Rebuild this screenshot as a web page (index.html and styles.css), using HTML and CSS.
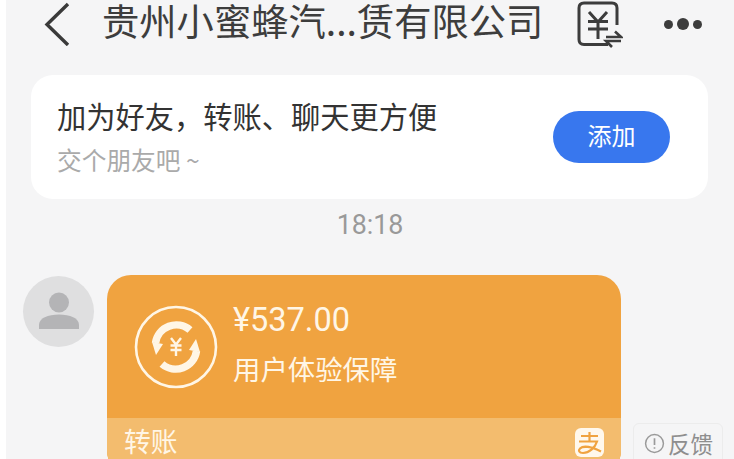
FILE: index.html
```html
<!DOCTYPE html>
<html lang="zh-CN">
<head>
    <meta charset="UTF-8">
    <meta name="viewport" content="width=device-width, initial-scale=1.0">
    <title>转账</title>
    <link rel="stylesheet" href="styles.css">
</head>
<body>
    <div class="chat-page">
        <div class="top-bar">
            <svg class="back-icon" width="30" height="44" viewBox="0 0 30 44">
                <path d="M25 2 L4 22.5 L25 43" fill="none" stroke="#3a3a3a" stroke-width="3.4"/>
            </svg>
            <div class="chat-title">贵州小蜜蜂汽...赁有限公司</div>
            <svg class="bill-icon" width="46" height="48" viewBox="0 0 46 48">
                <path d="M31 43.5 H7 Q2 43.5 2 38.5 V7 Q2 2 7 2 H35 Q40 2 40 7 V24" fill="none" stroke="#3c3c3c" stroke-width="3"/>
                <path d="M12 11 L21 21 L30 11 M11 20.500 H31 M11 28 H31 M21 21 V38" fill="none" stroke="#3c3c3c" stroke-width="3"/>
                <path d="M29 36 H44 L38 30.500 M44 40 H29 L35 46" fill="none" stroke="#3c3c3c" stroke-width="2.600"/>
            </svg>
            <div class="more-dots">
                <span class="dot small"></span>
                <span class="dot"></span>
                <span class="dot small"></span>
            </div>
        </div>

        <div class="friend-card">
            <div class="friend-text">
                <div class="friend-title">加为好友，转账、聊天更方便</div>
                <div class="friend-sub">交个朋友吧 ~</div>
            </div>
            <div class="add-btn">添加</div>
        </div>

        <div class="chat-time">18:18</div>

        <div class="message-row">
            <div class="avatar">
                <svg width="42" height="42" viewBox="0 0 42 42">
                    <circle cx="21" cy="11.500" r="10" fill="#b4b4b6"/>
                    <path d="M1 38 V34 C1 27 10 23.500 21 23.500 C32 23.500 41 27 41 34 V38 Z" fill="#b4b4b6"/>
                </svg>
            </div>
            <div class="transfer-card">
                <div class="transfer-main">
                    <svg class="transfer-icon" width="84" height="84" viewBox="0 0 84 84">
                        <circle cx="42" cy="42" r="40" fill="none" stroke="#fff6e6" stroke-width="2.600"/>
                        <path d="M56 25 A21 21 0 0 0 21.500 38" fill="none" stroke="#fff6e6" stroke-width="7.500"/>
                        <path d="M28 59 A21 21 0 0 0 62.500 46" fill="none" stroke="#fff6e6" stroke-width="7.500"/>
                        <path d="M18 37 L29 39 L22 50 Z" fill="#fff6e6"/>
                        <path d="M66 47 L55 45 L62 34 Z" fill="#fff6e6"/>
                        <path d="M37 33 L42 39.500 L47 33 M36.500 40.500 H47.500 M36.500 45 H47.500 M42 39.500 V51" fill="none" stroke="#fff6e6" stroke-width="2.400"/>
                    </svg>
                    <div class="transfer-info">
                        <div class="transfer-amount">¥537.00</div>
                        <div class="transfer-note">用户体验保障</div>
                    </div>
                </div>
                <div class="transfer-footer">
                    <span class="transfer-label">转账</span>
                    <svg class="alipay-icon" width="29" height="29" viewBox="0 0 29 29">
                        <rect width="29" height="29" rx="6" fill="#fff8ec"/>
                        <path d="M6 8 H23 M14.500 4 V13 M4 13.500 H22 C20 20 14 25 8 25 C4 25 3 22.500 5 20.500 C8 17.500 16 18.500 26 23.500" fill="none" stroke="#f0a340" stroke-width="2.200"/>
                    </svg>
                </div>
            </div>
            <div class="feedback-btn">
                <svg width="21" height="21" viewBox="0 0 20 20">
                    <circle cx="10" cy="10" r="8.500" fill="none" stroke="#9a9a9a" stroke-width="1.400"/>
                    <path d="M10 5 V11.500 M10 13.500 V15" fill="none" stroke="#9a9a9a" stroke-width="1.600"/>
                </svg>
                <span>反馈</span>
            </div>
        </div>
    </div>
</body>
</html>
```

FILE: styles.css
```css
body {
    margin: 0;
    background: #fff;
    font-family: "Noto Sans CJK SC", "Liberation Sans", sans-serif;
    overflow: hidden;
}

.chat-page {
    width: 728px;
    height: 459px;
    margin-left: 6px;
    background: #f5f5f6;
    overflow: hidden;
}

.top-bar {
    height: 75px;
    display: flex;
    align-items: flex-start;
}

.back-icon {
    margin: 2px 0 0 37px;
}

.chat-title {
    margin-left: 29px;
    width: 445px;
    font-size: 37.300px;
    line-height: 40px;
    color: #3d3d3d;
    white-space: nowrap;
}

.bill-icon {
    margin: 1px 0 0 30px;
}

.more-dots {
    display: flex;
    align-items: center;
    gap: 4px;
    margin: 18px 0 0 41px;
}

.dot {
    width: 12px;
    height: 12px;
    border-radius: 50%;
    background: #3c3c3c;
}

.dot.small {
    width: 9px;
    height: 9px;
}

.friend-card {
    width: 677px;
    height: 124px;
    margin-left: 25px;
    box-sizing: border-box;
    padding: 0 38px 0 26px;
    background: #fff;
    border-radius: 22px;
    display: flex;
    align-items: center;
    justify-content: space-between;
}

.friend-text {
    margin-bottom: 4px;
}

.friend-title {
    font-size: 29.250px;
    line-height: 42px;
    color: #333;
    margin-bottom: 5px;
}

.friend-sub {
    font-size: 24.700px;
    line-height: 36px;
    color: #aaa;
}

.add-btn {
    width: 117px;
    height: 52px;
    border-radius: 26px;
    background: #3877ee;
    color: #fff;
    font-size: 24px;
    line-height: 48px;
    text-align: center;
}

.chat-time {
    margin-top: 7px;
    text-align: center;
    font-family: Roboto, sans-serif;
    font-size: 26.800px;
    line-height: 38px;
    color: #999;
}

.message-row {
    margin-top: 31px;
    padding-left: 17px;
    display: flex;
    align-items: flex-start;
}

.avatar {
    width: 71px;
    height: 71px;
    margin-top: 1px;
    border-radius: 50%;
    background: #dfdfe0;
    display: flex;
    align-items: center;
    justify-content: center;
}

.transfer-card {
    width: 514px;
    height: 200px;
    margin-left: 13px;
    border-radius: 24px;
    overflow: hidden;
    background: #f0a340;
    color: #fff6e6;
    flex-shrink: 0;
}

.transfer-main {
    height: 143px;
    padding-left: 27px;
    box-sizing: border-box;
    display: flex;
    align-items: center;
}

.transfer-info {
    margin-left: 15px;
    margin-bottom: 5px;
}

.transfer-amount {
    font-family: Roboto, sans-serif;
    font-size: 32.500px;
    line-height: 50px;
}

.transfer-note {
    margin-top: -2px;
    font-size: 27.400px;
    line-height: 50px;
}

.transfer-footer {
    height: 57px;
    background: #f3bc6e;
    padding: 0 17px 0 17px;
    display: flex;
    align-items: flex-start;
    justify-content: space-between;
}

.transfer-label {
    font-size: 26.800px;
    line-height: 46px;
}

.alipay-icon {
    margin-top: 10px;
}

.feedback-btn {
    width: 90px;
    height: 60px;
    margin: 148px 0 0 12px;
    box-sizing: border-box;
    border: 1px solid #ececec;
    border-radius: 6px;
    padding-left: 10px;
    display: flex;
    align-items: flex-start;
    gap: 3px;
    color: #8e8e8e;
    font-size: 22.500px;
    line-height: 38px;
    flex-shrink: 0;
}

.feedback-btn svg {
    margin-top: 9px;
}
```
